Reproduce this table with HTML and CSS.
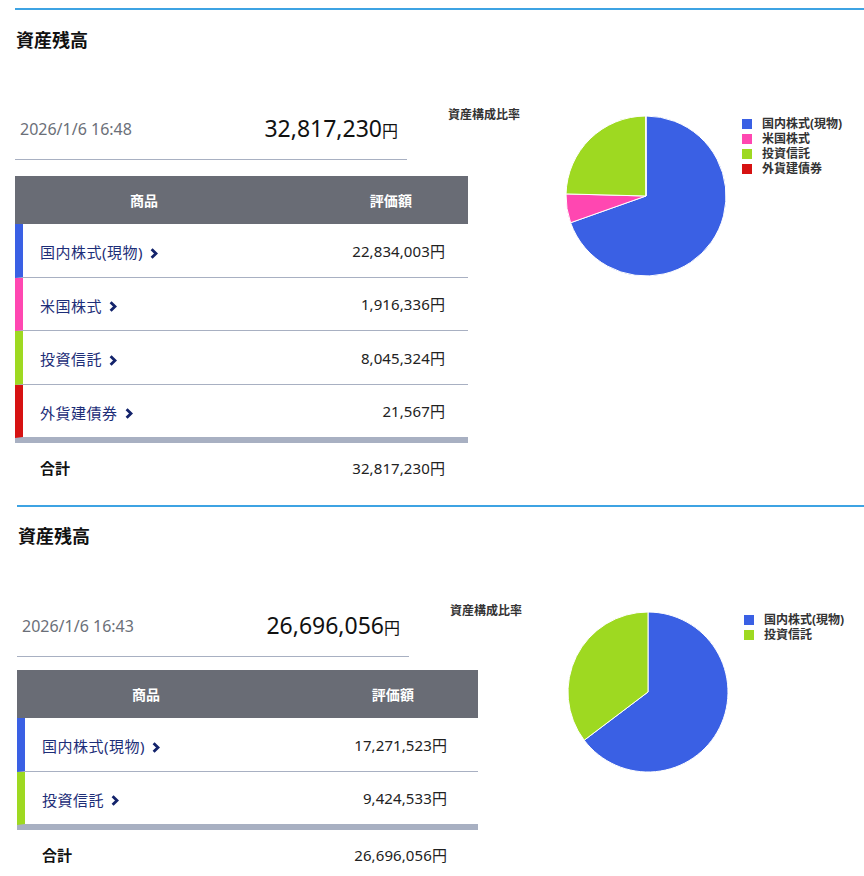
FILE: index.html
```html
<!DOCTYPE html>
<html lang="ja">
<head>
<meta charset="utf-8">
<title>資産残高</title>
<link rel="stylesheet" href="styles.css">
</head>
<body>
<section class="panel panel--first">
  <h2 class="panel-title">資産残高</h2>
  <div class="panel-body">
    <div class="balance">
      <div class="summary">
        <span class="summary-date">2026/1/6 16:48</span>
        <span class="summary-total">32,817,230<span class="yen">円</span></span>
      </div>
      <div class="asset-table">
        <div class="asset-head">
          <span class="col-name">商品</span>
          <span class="col-amount">評価額</span>
        </div>
        <div class="asset-row bar-blue">
          <a class="col-name asset-link">国内株式(現物)<svg class="chev" viewBox="0 0 8 11" width="8" height="11"><polyline points="1.6,1.2 6,5.5 1.6,9.8" /></svg></a>
          <span class="col-amount">22,834,003円</span>
        </div>
        <div class="asset-row bar-pink">
          <a class="col-name asset-link">米国株式<svg class="chev" viewBox="0 0 8 11" width="8" height="11"><polyline points="1.6,1.2 6,5.5 1.6,9.8" /></svg></a>
          <span class="col-amount">1,916,336円</span>
        </div>
        <div class="asset-row bar-green">
          <a class="col-name asset-link">投資信託<svg class="chev" viewBox="0 0 8 11" width="8" height="11"><polyline points="1.6,1.2 6,5.5 1.6,9.8" /></svg></a>
          <span class="col-amount">8,045,324円</span>
        </div>
        <div class="asset-row bar-red">
          <a class="col-name asset-link">外貨建債券<svg class="chev" viewBox="0 0 8 11" width="8" height="11"><polyline points="1.6,1.2 6,5.5 1.6,9.8" /></svg></a>
          <span class="col-amount">21,567円</span>
        </div>
        <div class="asset-total">
          <span class="col-name total-label">合計</span>
          <span class="col-amount">32,817,230円</span>
        </div>
      </div>
    </div>
    <div class="chart">
      <div class="chart-title">資産構成比率</div>
      <svg class="pie" viewBox="0 0 164 164" width="164" height="164">
        <path class="slice-blue" d="M82,82 L82,2 A80,80 0 1 1 6.60,108.73 Z"/>
        <path class="slice-pink" d="M82,82 L6.60,108.73 A80,80 0 0 1 2.03,79.91 Z"/>
        <path class="slice-green" d="M82,82 L2.03,79.91 A80,80 0 0 1 81.66,2 Z"/>
        <path class="slice-red" d="M82,82 L81.66,2 A80,80 0 0 1 82,2 Z"/>
      </svg>
      <ul class="legend">
        <li><span class="swatch sw-blue"></span>国内株式(現物)</li>
        <li><span class="swatch sw-pink"></span>米国株式</li>
        <li><span class="swatch sw-green"></span>投資信託</li>
        <li><span class="swatch sw-red"></span>外貨建債券</li>
      </ul>
    </div>
  </div>
</section>

<section class="panel panel--second">
  <h2 class="panel-title">資産残高</h2>
  <div class="panel-body">
    <div class="balance">
      <div class="summary">
        <span class="summary-date">2026/1/6 16:43</span>
        <span class="summary-total">26,696,056<span class="yen">円</span></span>
      </div>
      <div class="asset-table">
        <div class="asset-head">
          <span class="col-name">商品</span>
          <span class="col-amount">評価額</span>
        </div>
        <div class="asset-row bar-blue">
          <a class="col-name asset-link">国内株式(現物)<svg class="chev" viewBox="0 0 8 11" width="8" height="11"><polyline points="1.6,1.2 6,5.5 1.6,9.8" /></svg></a>
          <span class="col-amount">17,271,523円</span>
        </div>
        <div class="asset-row bar-green">
          <a class="col-name asset-link">投資信託<svg class="chev" viewBox="0 0 8 11" width="8" height="11"><polyline points="1.6,1.2 6,5.5 1.6,9.8" /></svg></a>
          <span class="col-amount">9,424,533円</span>
        </div>
        <div class="asset-total">
          <span class="col-name total-label">合計</span>
          <span class="col-amount">26,696,056円</span>
        </div>
      </div>
    </div>
    <div class="chart">
      <div class="chart-title">資産構成比率</div>
      <svg class="pie" viewBox="0 0 164 164" width="164" height="164">
        <path class="slice-blue" d="M82,82 L82,2 A80,80 0 1 1 18.18,130.25 Z"/>
        <path class="slice-green" d="M82,82 L18.18,130.25 A80,80 0 0 1 82,2 Z"/>
      </svg>
      <ul class="legend">
        <li><span class="swatch sw-blue"></span>国内株式(現物)</li>
        <li><span class="swatch sw-green"></span>投資信託</li>
      </ul>
    </div>
  </div>
</section>
</body>
</html>
```
FILE: styles.css
```css
* { box-sizing: border-box; }

html, body {
  margin: 0;
  padding: 0;
  background: #fff;
}

body {
  font-family: "Noto Sans", "Noto Sans CJK JP", sans-serif;
  color: #222;
  overflow: hidden;
}

.panel {
  border-top: 2px solid #3ea3e3;
}

.panel--first {
  margin: 8px 0 0 15px;
}

.panel--second {
  margin: 13px 0 0 17px;
}

.panel-title {
  margin: 18px 0 0 1px;
  font-size: 18px;
  line-height: 24px;
  font-weight: 700;
  color: #111;
}

.panel--second .panel-title {
  margin-top: 17px;
}

.panel-body {
  display: flex;
  align-items: flex-start;
}

.balance {
  width: 433px;
  flex-shrink: 0;
  padding-top: 57px;
}

.panel--second .balance {
  padding-top: 58px;
}

.summary {
  width: 392px;
  height: 51px;
  padding: 0 9px 10px 5px;
  display: flex;
  align-items: center;
  justify-content: space-between;
  border-bottom: 1px solid #a8b0c2;
}

.summary-date {
  font-size: 16px;
  color: #6b6f78;
}

.summary-total {
  font-size: 23px;
  line-height: 40px;
  color: #111;
}

.yen {
  font-size: 16px;
}

.asset-table {
  width: 453px;
  margin-top: 16px;
}

.panel--second .asset-table {
  width: 461px;
  margin-top: 13px;
}

.asset-head {
  height: 48px;
  display: flex;
  align-items: center;
  background: #696c75;
  color: #fff;
  font-size: 14px;
  font-weight: 700;
}

.asset-head .col-name {
  width: 258px;
  text-align: center;
}

.asset-head .col-amount {
  width: 172px;
  text-align: right;
  padding-right: 33px;
}

.asset-row {
  height: 53.5px;
  display: flex;
  align-items: center;
  border-bottom: 1px solid #a8b0c2;
  border-left: 8px solid transparent;
  font-size: 15px;
}

.asset-row:last-of-type,
.asset-row + .asset-total {
  border-bottom: 0;
}

.asset-row .col-name {
  width: 250px;
  padding-left: 17px;
}

.col-amount {
  width: 195px;
  text-align: right;
  padding-right: 23px;
  letter-spacing: 0.1px;
}

.asset-link {
  color: #1d2e78;
  text-decoration: none;
  letter-spacing: 0.5px;
  padding-top: 3px;
  display: flex;
  align-items: center;
}

.chev {
  margin-left: 7px;
  margin-top: 3px;
  fill: none;
  stroke: #13236b;
  stroke-width: 2.8;
}

.bar-blue { border-left-color: #3a60e4; }
.bar-pink { border-left-color: #ff47b1; }
.bar-green { border-left-color: #9ed921; }
.bar-red { border-left-color: #d61212; }

.asset-total {
  height: 54px;
  display: flex;
  align-items: center;
  border-top: 5px solid #a8b0c2;
  border-bottom: 1px solid #a8b0c2;
  font-size: 15px;
}

.total-label {
  width: 258px;
  padding-left: 25px;
  font-weight: 700;
  color: #111;
}

.chart {
  display: flex;
  align-items: flex-start;
  padding-top: 55px;
}

.chart-title {
  width: 72px;
  font-size: 12px;
  line-height: 16px;
  font-weight: 700;
  color: #333;
  white-space: nowrap;
}

.pie {
  margin: 7px 0 0 44px;
  display: block;
}

.pie path {
  stroke: #fff;
  stroke-width: 1;
}

.slice-blue { fill: #3a60e4; }
.slice-pink { fill: #ff47b1; }
.slice-green { fill: #9ed921; }
.slice-red { fill: #d61212; }

.legend {
  list-style: none;
  margin: 9px 0 0 14px;
  padding: 0;
  font-size: 12px;
  font-weight: 700;
  color: #333;
}

.legend li {
  height: 15px;
  line-height: 15px;
  display: flex;
  align-items: center;
  white-space: nowrap;
}

.swatch {
  width: 10px;
  height: 10px;
  margin-right: 10px;
  flex-shrink: 0;
}

.sw-blue { background: #3a60e4; }
.sw-pink { background: #ff47b1; }
.sw-green { background: #9ed921; }
.sw-red { background: #d61212; }
```
